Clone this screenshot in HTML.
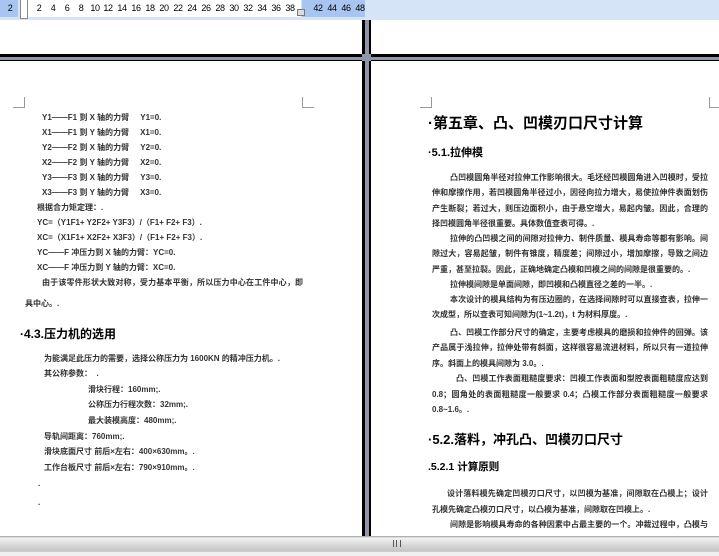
<!DOCTYPE html>
<html><head><meta charset="utf-8"><style>
*{margin:0;padding:0;box-sizing:border-box}
body{width:719px;height:556px;overflow:hidden;background:#fff;position:relative;font-family:"Liberation Sans","Noto Sans CJK SC",sans-serif;color:#2a2a2a}
.a{position:absolute;white-space:nowrap}
.n{position:absolute;top:3px;font-size:9px;color:#000;width:14px;text-align:center;margin-left:-7px;letter-spacing:-0.4px}
.t{position:absolute;font-size:8px;line-height:10px;white-space:nowrap;font-weight:bold;color:#333}
.j{text-align:justify;text-align-last:justify;white-space:normal;overflow:hidden;height:10px}
.h{position:absolute;font-weight:bold;white-space:nowrap;color:#000}
.c{position:absolute;border-color:#999;border-style:solid;width:12px;height:11px}
</style></head><body>
<!-- ruler -->
<div class="a" style="left:0;top:0;width:719px;height:20px;background:#d6e4f8"></div>
<div class="a" style="left:0;top:0;width:18px;height:17px;background:#a8c4f0"></div>
<div class="a" style="left:26px;top:0;width:275px;height:17px;background:#fff"></div>
<div class="a" style="left:302px;top:0;width:63px;height:17px;background:#a8c4f0"></div>
<div class="a" style="left:20px;top:0;width:8px;height:19px;border:1px solid #888;background:#fff;border-top:none"></div>
<span class="n" style="left:10px">2</span>
<span class="n" style="left:39px">2</span><span class="n" style="left:53px">4</span><span class="n" style="left:67px">6</span><span class="n" style="left:81px">8</span><span class="n" style="left:95px">10</span><span class="n" style="left:108px">12</span><span class="n" style="left:122px">14</span><span class="n" style="left:136px">16</span><span class="n" style="left:150px">18</span><span class="n" style="left:164px">20</span><span class="n" style="left:178px">22</span><span class="n" style="left:192px">24</span><span class="n" style="left:206px">26</span><span class="n" style="left:220px">28</span><span class="n" style="left:234px">30</span><span class="n" style="left:248px">32</span><span class="n" style="left:262px">34</span><span class="n" style="left:276px">36</span><span class="n" style="left:290px">38</span>
<span class="n" style="left:318px">42</span><span class="n" style="left:332px">44</span><span class="n" style="left:346px">46</span><span class="n" style="left:360px">48</span>
<div class="a" style="left:297px;top:9px;width:8px;height:7px;border:1px solid #777;background:#ddd"></div>
<!-- page separators -->
<div class="a" style="left:0;top:54px;width:719px;height:3px;background:#000"></div>
<div class="a" style="left:0;top:57px;width:719px;height:3px;background:#8e96a8"></div>
<div class="a" style="left:0;top:60px;width:719px;height:1px;background:#000"></div>
<div class="a" style="left:362px;top:20px;width:9px;height:516px;background:#8e96a8;border-left:3px solid #000;border-right:2px solid #000"></div>
<div class="a" style="left:362px;top:54px;width:9px;height:7px;background:#8e96a8"></div>
<!-- corners -->
<div class="c" style="left:13px;top:97px;border-width:0 1px 1px 0"></div>
<div class="c" style="left:302px;top:97px;border-width:0 0 1px 1px"></div>
<div class="c" style="left:420px;top:97px;border-width:0 1px 1px 0"></div>
<div class="c" style="left:709px;top:97px;border-width:0 0 1px 1px"></div>
<!-- left page -->
<div class="t" style="left:42px;top:113px">Y1——F1 到 X 轴的力臂&nbsp;&nbsp;&nbsp;&nbsp;&nbsp;Y1=0.</div>
<div class="t" style="left:42px;top:128px">X1——F1 到 Y 轴的力臂&nbsp;&nbsp;&nbsp;&nbsp;&nbsp;X1=0.</div>
<div class="t" style="left:42px;top:143px">Y2——F2 到 X 轴的力臂&nbsp;&nbsp;&nbsp;&nbsp;&nbsp;Y2=0.</div>
<div class="t" style="left:42px;top:158px">X2——F2 到 Y 轴的力臂&nbsp;&nbsp;&nbsp;&nbsp;&nbsp;X2=0.</div>
<div class="t" style="left:42px;top:173px">Y3——F3 到 X 轴的力臂&nbsp;&nbsp;&nbsp;&nbsp;&nbsp;Y3=0.</div>
<div class="t" style="left:42px;top:188px">X3——F3 到 Y 轴的力臂&nbsp;&nbsp;&nbsp;&nbsp;&nbsp;X3=0.</div>
<div class="t" style="left:37px;top:203px">根据合力矩定理：.</div>
<div class="t" style="left:37px;top:218px">YC=（Y1F1+ Y2F2+ Y3F3）/（F1+ F2+ F3）.</div>
<div class="t" style="left:37px;top:233px">XC=（X1F1+ X2F2+ X3F3）/（F1+ F2+ F3）.</div>
<div class="t" style="left:37px;top:248px">YC——F 冲压力到 X 轴的力臂：YC=0.</div>
<div class="t" style="left:37px;top:263px">XC——F 冲压力到 Y 轴的力臂：XC=0.</div>
<div class="t j" style="left:42px;top:278px;width:261px">由于该零件形状大致对称，受力基本平衡，所以压力中心在工件中心，即模</div>
<div class="t" style="left:25px;top:299px">具中心。.</div>
<div class="h" style="left:20px;top:325px;font-size:12px">·4.3.压力机的选用</div>
<div class="t" style="left:44px;top:354px">为能满足此压力的需要，选择公称压力为 1600KN 的精冲压力机。.</div>
<div class="t" style="left:44px;top:369px">其公称参数：&nbsp;&nbsp;.</div>
<div class="t" style="left:88px;top:385px">滑块行程：160mm;.</div>
<div class="t" style="left:88px;top:400px">公称压力行程次数：32mm;.</div>
<div class="t" style="left:88px;top:416px">最大装模高度：480mm;.</div>
<div class="t" style="left:44px;top:432px">导轨间距离：760mm;.</div>
<div class="t" style="left:44px;top:447px">滑块底面尺寸 前后×左右：400×630mm。.</div>
<div class="t" style="left:44px;top:463px">工作台板尺寸 前后×左右：790×910mm。.</div>
<div class="t" style="left:38px;top:479px">.</div>
<div class="t" style="left:38px;top:498px">.</div>
<!-- right page -->
<div class="h" style="left:428px;top:112px;font-size:15px">·第五章、凸、凹模刃口尺寸计算</div>
<div class="h" style="left:428px;top:144px;font-size:11px">·5.1.拉伸模</div>
<div class="t j" style="left:450px;top:173px;width:258px">凸凹模圆角半径对拉伸工作影响很大。毛坯经凹模圆角进入凹模时，受拉</div>
<div class="t j" style="left:432px;top:188px;width:276px">伸和摩擦作用，若凹模圆角半径过小，因径向拉力增大，易使拉伸件表面划伤或</div>
<div class="t j" style="left:432px;top:204px;width:276px">产生断裂；若过大，则压边面积小，由于悬空增大，易起内皱。因此，合理的选</div>
<div class="t" style="left:432px;top:219px">择凹模圆角半径很重要。具体数值查表可得。.</div>
<div class="t j" style="left:450px;top:234px;width:258px">拉伸的凸凹模之间的间隙对拉伸力、制件质量、模具寿命等都有影响。间</div>
<div class="t j" style="left:432px;top:249px;width:276px">隙过大，容易起皱，制件有锥度，精度差；间隙过小，增加摩擦，导致之间边洞</div>
<div class="t" style="left:432px;top:265px">严重，甚至拉裂。因此，正确地确定凸模和凹模之间的间隙是很重要的。.</div>
<div class="t" style="left:450px;top:280px">拉伸模间隙是单面间隙，即凹模和凸模直径之差的一半。.</div>
<div class="t j" style="left:450px;top:295px;width:258px">本次设计的模具结构为有压边圈的，在选择间隙时可以直接查表，拉伸一</div>
<div class="t" style="left:432px;top:310px">次成型，所以查表可知间隙为(1~1.2t)，t 为材料厚度。.</div>
<div class="t j" style="left:450px;top:328px;width:258px">凸、凹模工作部分尺寸的确定，主要考虑模具的磨损和拉伸件的回弹。该</div>
<div class="t j" style="left:432px;top:343px;width:276px">产品属于浅拉伸，拉伸处带有斜面，这样很容易流进材料，所以只有一道拉伸工</div>
<div class="t" style="left:432px;top:359px">序。斜面上的模具间隙为 3.0。.</div>
<div class="t j" style="left:456px;top:374px;width:252px">凸、凹模工作表面粗糙度要求：凹模工作表面和型腔表面粗糙度应达到</div>
<div class="t j" style="left:432px;top:390px;width:276px">0.8；圆角处的表面粗糙度一般要求 0.4；凸模工作部分表面粗糙度一般要求</div>
<div class="t" style="left:432px;top:405px">0.8~1.6。.</div>
<div class="h" style="left:428px;top:429px;font-size:13px">·5.2.落料，冲孔凸、凹模刃口尺寸</div>
<div class="h" style="left:428px;top:459px;font-size:10.5px">.5.2.1 计算原则</div>
<div class="t j" style="left:447px;top:489px;width:261px">设计落料模先确定凹模刃口尺寸，以凹模为基准，间隙取在凸模上；设计冲</div>
<div class="t" style="left:432px;top:505px">孔模先确定凸模刃口尺寸，以凸模为基准，间隙取在凹模上。.</div>
<div class="t j" style="left:450px;top:520px;width:258px">间隙是影响模具寿命的各种因素中占最主要的一个。冲裁过程中，凸模与</div>
<!-- scrollbar -->
<div class="a" style="left:0;top:536px;width:719px;height:15px;background:linear-gradient(#9a9a9a 0,#f2f2f2 2px,#dcdcdc 8px,#c8c8c8 14px);"></div>
<div class="a" style="left:0;top:551px;width:719px;height:5px;background:#f0f0f0;border-top:1px solid #ccc"></div>
<div class="a" style="left:393px;top:540px;width:8px;height:7px;border-left:1px solid #555;border-right:1px solid #555"></div>
<div class="a" style="left:396px;top:540px;width:2px;height:7px;border-left:1px solid #555"></div>
</body></html>
